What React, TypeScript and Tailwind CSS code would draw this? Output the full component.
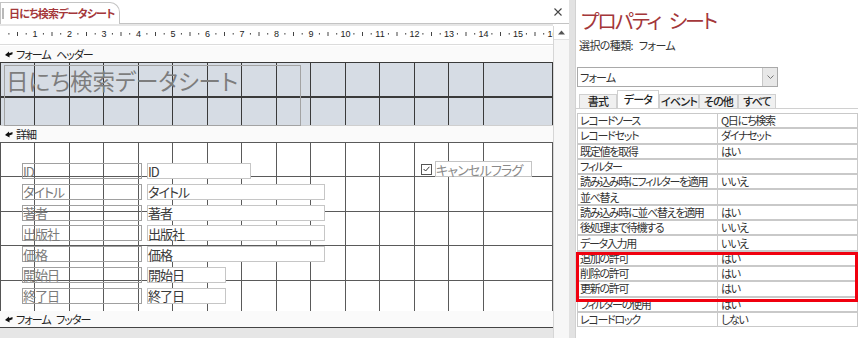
const font = "font-['Noto_Sans_CJK_JP',sans-serif] [font-feature-settings:'palt']";

const detailRows = [
  { label: 'ID', width: 'w-[104px]' },
  { label: 'タイトル', width: 'w-[178px]' },
  { label: '著者', width: 'w-[178px]' },
  { label: '出版社', width: 'w-[178px]' },
  { label: '価格', width: 'w-[178px]' },
  { label: '開始日', width: 'w-[79px]' },
  { label: '終了日', width: 'w-[79px]' },
];

const props: [string, string][] = [
  ['レコードソース', 'Q日にち検索'],
  ['レコードセット', 'ダイナセット'],
  ['既定値を取得', 'はい'],
  ['フィルター', ''],
  ['読み込み時にフィルターを適用', 'いいえ'],
  ['並べ替え', ''],
  ['読み込み時に並べ替えを適用', 'はい'],
  ['後処理まで待機する', 'いいえ'],
  ['データ入力用', 'いいえ'],
  ['追加の許可', 'はい'],
  ['削除の許可', 'はい'],
  ['更新の許可', 'はい'],
  ['フィルターの使用', 'はい'],
  ['レコードロック', 'しない'],
];

const tabs = ['書式', 'データ', 'イベント', 'その他', 'すべて'];
const tabWidths = ['w-[38px]', 'w-[42px]', 'w-[40px]', 'w-[39px]', 'w-[38px]'];

function SectionIcon() {
  return (
    <svg width="8" height="7" viewBox="0 0 8 7" className="shrink-0">
      <path d="M0 4 L4 0.5 L4.2 2.2 L7.5 1 L7.5 3.2 L4.4 4.4 L4.6 6.5 Z" fill="#111" />
    </svg>
  );
}

function SectionBar({ title }: { readonly title: string }) {
  return (
    <div className="flex h-[16px] items-center gap-[3px] bg-[#fafafa] pl-[5px] text-[11px] leading-none tracking-[-1px] whitespace-pre text-[#222] [word-spacing:4px]">
      <SectionIcon />
      <span>{title}</span>
    </div>
  );
}

function Ruler() {
  const cm = 34.5;
  const marks = [];
  for (let i = 0; i < 17; i++) {
    const x = i * cm;
    if (i > 0) {
      marks.push(
        <text key={`n${i}`} x={x + 0.5} y={11} fontSize="9" textAnchor="middle" fill="#222" fontFamily="'Liberation Sans',sans-serif">
          {i}
        </text>,
      );
    }
    marks.push(<rect key={`a${i}`} x={x + 8.4} y={7} width={1} height={1.6} fill="#444" />);
    marks.push(<rect key={`b${i}`} x={x + 17} y={6} width={1} height={4} fill="#444" />);
    marks.push(<rect key={`c${i}`} x={x + 25.7} y={7} width={1} height={1.6} fill="#444" />);
  }
  return (
    <svg width="553" height="18" viewBox="0 0 553 18" className="block">
      {marks}
    </svg>
  );
}

function DesignView() {
  return (
    <div className="flex w-[569px] shrink-0 flex-col bg-white">
      <div className="flex h-[24px] items-end">
        <div className="flex h-[22px] w-[120px] items-center gap-[5px] rounded-tr-[10px] border border-b-0 border-[#c4c4c4] bg-white pl-[1px]">
          <span className="h-[11px] w-[2px] bg-[#b9b9b9]" />
          <span className="whitespace-nowrap text-[11px] font-bold leading-none tracking-[-0.8px] text-[#a4373a]">日にち検索データシート</span>
        </div>
        <div className="flex h-full flex-1 items-center justify-end border-b border-[#c4c4c4] pr-[7px]">
          <svg width="8" height="8" viewBox="0 0 8 8">
            <path d="M0.5 0.5 L7.5 7.5 M7.5 0.5 L0.5 7.5" stroke="#444" strokeWidth="1.1" />
          </svg>
        </div>
      </div>
      <div className="flex min-h-0 flex-1">
        <div className="flex w-[553px] flex-col bg-[#e6e6e6]">
          <div className="mt-[2px] border-b border-[#dcdcdc] bg-white">
            <Ruler />
          </div>
          <div className="h-[1px] bg-white" />
          <SectionBar title="フォーム ヘッダー" />
          <div className="relative h-[63px] border-l border-[#3a3a3a] bg-[#d6dce4] bg-[image:repeating-linear-gradient(90deg,transparent_0px,transparent_33.5px,#3a3a3a_33.5px,#3a3a3a_34.5px),repeating-linear-gradient(180deg,#3a3a3a_0px,#3a3a3a_1px,transparent_1px,transparent_34.5px)]">
            <div className="absolute left-[3px] top-[3px] h-[61px] w-[297px] whitespace-nowrap border border-[#a3a3a3] pl-[1px] text-[22.5px] leading-[28px] text-[#7d7d7d]">
              日にち検索データシート
            </div>
          </div>
          <div className="border-t border-[#cfcfcf]">
            <SectionBar title="詳細" />
          </div>
          <div className="relative h-[169px] border-l border-[#555] bg-white bg-[image:repeating-linear-gradient(90deg,transparent_0px,transparent_33.5px,#5a5a5a_33.5px,#5a5a5a_34.5px),repeating-linear-gradient(180deg,#5a5a5a_0px,#5a5a5a_1px,transparent_1px,transparent_34.5px)]">
            <div className="flex flex-col gap-[4.8px] pl-[21px] pt-[21px]">
              {detailRows.map((row) => (
                <div key={row.label} className="flex h-[16px] gap-[5px]">
                  <div className="flex w-[120px] items-center border border-[#a0a0a0] text-[13px] leading-none tracking-[-1px] text-[#7a7a7a]">
                    {row.label}
                  </div>
                  <div className={`flex ${row.width} items-center border border-[#c6c6c6] bg-white text-[13px] leading-none tracking-[-1px] text-[#3a3a3a]`}>
                    {row.label}
                  </div>
                </div>
              ))}
            </div>
            <div className="absolute left-[420px] top-[19px] flex items-center gap-[3px]">
              <span className="flex h-[11px] w-[11px] items-center justify-center border border-[#555] bg-white">
                <svg width="7" height="6" viewBox="0 0 7 6">
                  <path d="M0.6 3 L2.6 5 L6.4 0.8" stroke="#333" strokeWidth="1" fill="none" />
                </svg>
              </span>
              <span className="flex h-[16px] w-[97px] items-center whitespace-nowrap border border-[#c4c4c4] bg-white text-[13px] leading-none tracking-[-0.8px] text-[#8a8a8a]">
                キャンセルフラグ
              </span>
            </div>
          </div>
          <SectionBar title="フォーム フッター" />
          <div className="h-[1px] bg-[#444]" />
        </div>
        <div className="mt-[2px] flex w-[16px] flex-col border-l border-[#d6d6d6] bg-[#f7f7f7]">
          <div className="flex h-[14px] items-center justify-center border-b border-[#e2e2e2] bg-white">
            <svg width="7" height="5" viewBox="0 0 7 5">
              <path d="M0 4.5 L3.5 0.5 L7 4.5 Z" fill="#555" />
            </svg>
          </div>
        </div>
      </div>
    </div>
  );
}

function PropertySheet() {
  return (
    <div className="relative ml-[6px] flex flex-1 flex-col border-l border-[#d2d2d2] bg-white">
      <div className="whitespace-pre pl-[5px] pt-[8px] text-[20px] leading-[25px] tracking-[-2px] text-[#a4373a] [word-spacing:6px]">プロパティ シート</div>
      <div className="mt-[5px] whitespace-pre pl-[3px] text-[11px] leading-[14px] tracking-[-0.6px] text-[#333] [word-spacing:4px]">選択の種類: フォーム</div>
      <div className="ml-[1px] mt-[15px] flex h-[20px] w-[201px] border border-[#a9a9a9]">
        <div className="flex flex-1 items-center pl-[2px] text-[11px] leading-none tracking-[-0.8px]">フォーム</div>
        <div className="flex w-[15px] items-center justify-center border-l border-[#c8c8c8] bg-[#e8e8e8]">
          <svg width="7" height="4" viewBox="0 0 7 4">
            <path d="M0.5 0.5 L3.5 3.5 L6.5 0.5" stroke="#777" strokeWidth="1" fill="none" />
          </svg>
        </div>
      </div>
      <div className="mt-[4px] flex h-[18px] items-end border-b border-[#d0d0d0] pl-[3px]">
        {tabs.map((t, i) => (
          <div
            key={t}
            className={`flex ${tabWidths[i]} items-center justify-center whitespace-nowrap border border-b-0 border-[#d0d0d0] text-[11px] font-medium leading-none tracking-[-0.8px] text-[#222] ${i === 1 ? 'h-[18px] bg-white' : 'h-[14px] bg-[#f0f0f0]'}`}
          >
            {t}
          </div>
        ))}
      </div>
      <div className="ml-[1px] mt-[4px] flex flex-col">
        {props.map(([k, v]) => (
          <div key={k} className="flex h-[15.3px]">
            <div className="flex w-[141px] items-center overflow-hidden whitespace-nowrap border border-[#c9c9c9] pl-[2px] text-[11px] leading-none tracking-[-1.3px] text-[#333]">{k}</div>
            <div className="flex flex-1 items-center whitespace-nowrap border border-l-0 border-[#c9c9c9] pl-[3px] text-[11px] leading-none tracking-[-1.3px] text-[#333]">{v}</div>
          </div>
        ))}
      </div>
      <div className="absolute left-[0px] top-[252px] h-[50px] w-[282px] border-[3px] border-[#f0000f]" />
    </div>
  );
}

export default function App() {
  return (
    <div className={`flex h-[338px] w-[858px] overflow-hidden bg-[#e2e2e2] text-[#333] ${font}`}>
      <DesignView />
      <PropertySheet />
    </div>
  );
}
